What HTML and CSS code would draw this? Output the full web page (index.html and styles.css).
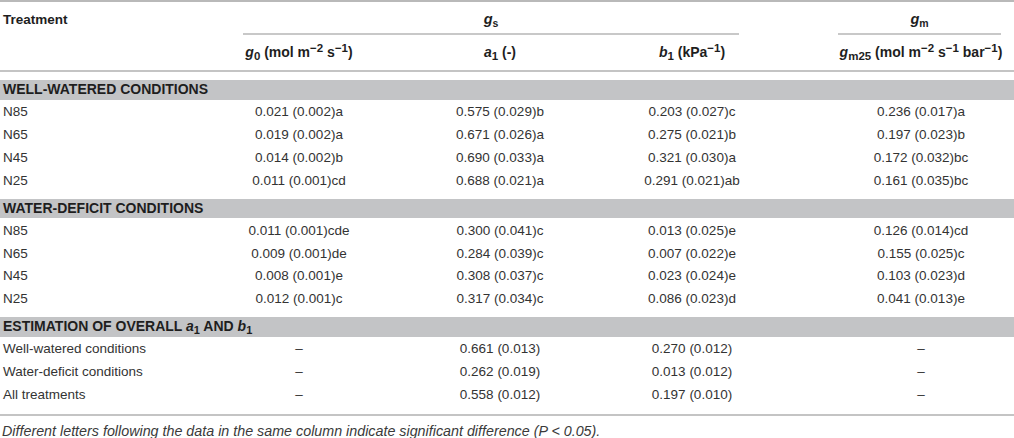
FILE: index.html
```html
<!DOCTYPE html>
<html lang="en">

<head>
    <meta charset="UTF-8">
    <title>Stomatal and mesophyll conductance parameters</title>
    <link rel="stylesheet" href="styles.css">
</head>

<body>
    <table class="data-table">
        <colgroup>
            <col class="col-treatment">
            <col class="col-g0">
            <col class="col-a1">
            <col class="col-b1">
            <col class="col-gm">
        </colgroup>
        <thead>
            <tr class="head-group">
                <th class="left"><div class="group-label plain">Treatment</div></th>
                <th colspan="3"><div class="group-label gs">
                    <i>g</i><sub>s</sub></div></th>
                <th><div class="group-label gm"><i>g</i><sub>m</sub></div></th>
            </tr>
            <tr class="head-units">
                <th></th>
                <th><i>g</i><sub>0</sub> (mol m<sup>−2</sup> s<sup>−1</sup>)</th>
                <th><i>a</i><sub>1</sub> (-)</th>
                <th><i>b</i><sub>1</sub> (kPa<sup>−1</sup>)</th>
                <th><i>g</i><sub>m25</sub> (mol m<sup>−2</sup> s<sup>−1</sup> bar<sup>−1</sup>)</th>
            </tr>
        </thead>
        <tbody>
            <tr class="band"><td colspan="5">WELL-WATERED CONDITIONS</td></tr>
            <tr><td>N85</td><td>0.021 (0.002)a</td><td>0.575 (0.029)b</td><td>0.203 (0.027)c</td><td>0.236 (0.017)a</td></tr>
            <tr><td>N65</td><td>0.019 (0.002)a</td><td>0.671 (0.026)a</td><td>0.275 (0.021)b</td><td>0.197 (0.023)b</td></tr>
            <tr><td>N45</td><td>0.014 (0.002)b</td><td>0.690 (0.033)a</td><td>0.321 (0.030)a</td><td>0.172 (0.032)bc</td></tr>
            <tr><td>N25</td><td>0.011 (0.001)cd</td><td>0.688 (0.021)a</td><td>0.291 (0.021)ab</td><td>0.161 (0.035)bc</td></tr>

            <tr class="band"><td colspan="5">WATER-DEFICIT CONDITIONS</td></tr>
            <tr><td>N85</td><td>0.011 (0.001)cde</td><td>0.300 (0.041)c</td><td>0.013 (0.025)e</td><td>0.126 (0.014)cd</td></tr>
            <tr><td>N65</td><td>0.009 (0.001)de</td><td>0.284 (0.039)c</td><td>0.007 (0.022)e</td><td>0.155 (0.025)c</td></tr>
            <tr><td>N45</td><td>0.008 (0.001)e</td><td>0.308 (0.037)c</td><td>0.023 (0.024)e</td><td>0.103 (0.023)d</td></tr>
            <tr><td>N25</td><td>0.012 (0.001)c</td><td>0.317 (0.034)c</td><td>0.086 (0.023)d</td><td>0.041 (0.013)e</td></tr>

            <tr class="band"><td colspan="5">ESTIMATION OF OVERALL <i>a</i><sub>1</sub> AND <i>b</i><sub>1</sub></td></tr>
            <tr><td>Well-watered conditions</td><td>–</td><td>0.661 (0.013)</td><td>0.270 (0.012)</td><td>–</td></tr>
            <tr><td>Water-deficit conditions</td><td>–</td><td>0.262 (0.019)</td><td>0.013 (0.012)</td><td>–</td></tr>
            <tr class="last"><td>All treatments</td><td>–</td><td>0.558 (0.012)</td><td>0.197 (0.010)</td><td>–</td></tr>
        </tbody>
    </table>

    <p class="footnote">Different letters following the data in the same column indicate significant difference (P &lt; 0.05).</p>
</body>

</html>
```

FILE: styles.css
```css
* {
    margin: 0;
    padding: 0;
    box-sizing: border-box;
}

body {
    font-family: 'Liberation Sans', Arial, Helvetica, sans-serif;
    font-size: 13.5px;
    color: #333;
    background: white;
    width: 1014px;
}

.data-table {
    width: 1014px;
    table-layout: fixed;
    border-collapse: separate;
    border-spacing: 0;
    border-top: 2px solid #b9b9b9;
    border-bottom: 2px solid #c4c4c4;
}

.col-treatment { width: 154px; }
.col-g0 { width: 290px; }
.col-a1 { width: 112px; }
.col-b1 { width: 272px; }
.col-gm { width: 186px; }

th {
    font-weight: bold;
    color: #1e1e1e;
    text-align: center;
    line-height: 15px;
}

th.left {
    text-align: left;
}

sub,
sup {
    font-size: 10.5px;
    line-height: 0;
}

sub {
    vertical-align: -3px;
}

sup {
    vertical-align: 5px;
}

/* first header row: group labels with rule underneath */
.head-group th {
    padding: 0;
    vertical-align: bottom;
}

.group-label {
    padding: 10px 0 6px;
    border-bottom: 2px solid #c8c8c8;
}

.group-label.plain {
    padding-left: 3px;
    border-bottom-color: transparent;
}

.group-label.gs,
.group-label.gm {
    font-size: 14.5px;
}

.group-label.gs {
    margin: 0 89px;
}

.group-label.gm {
    margin: 0 13px 0 10px;
}

.head-units th {
    padding: 10px 0;
    font-size: 14px;
    border-bottom: 2px solid #c4c4c4;
}

.head-units sub,
.head-units sup {
    font-size: 11.5px;
}

td {
    text-align: center;
    line-height: 15px;
    padding: 4.75px 0 3px;
    white-space: nowrap;
}

td:first-child {
    text-align: left;
    padding-left: 3px;
}

.band td {
    background: #c3c4c6;
    border-top: 8px solid white;
    font-size: 14px;
    font-weight: bold;
    color: #1e1e1e;
    line-height: 19.5px;
    padding: 0 0 0 3px;
}

.band sub {
    font-size: 11px;
}

.last td {
    padding-bottom: 12px;
}

.footnote {
    margin-top: 8px;
    padding-left: 2px;
    font-size: 14.3px;
    font-style: italic;
    line-height: 15px;
    color: #3a3a3a;
}
```
